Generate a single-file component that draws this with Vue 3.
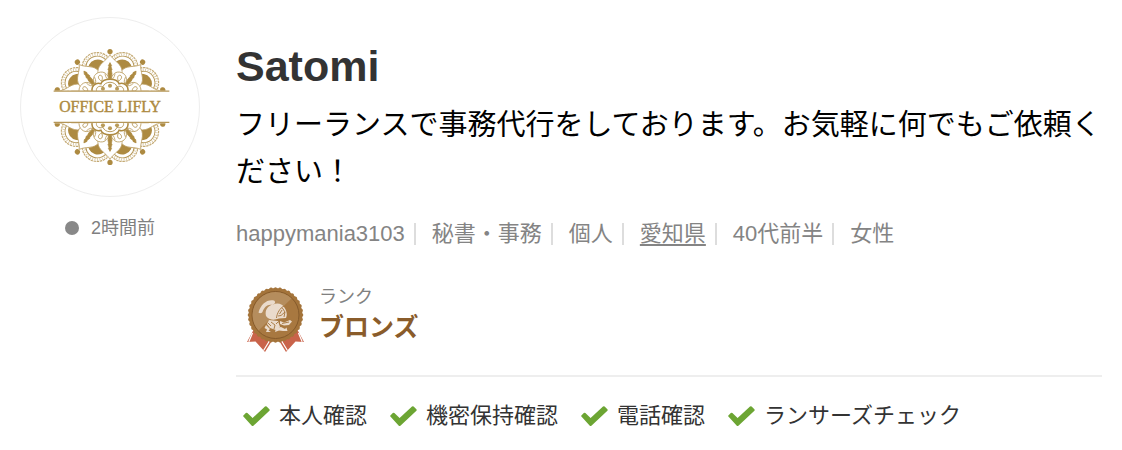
<script setup>
import { ref } from 'vue'

const user = ref({
  name: 'Satomi',
  lastSeen: '2時間前',
  intro: 'フリーランスで事務代行をしております。お気軽に何でもご依頼ください！',
  rank: 'ブロンズ'
})

const attributes = ref([
  { text: 'happymania3103' },
  { text: '秘書・事務' },
  { text: '個人' },
  { text: '愛知県', link: true },
  { text: '40代前半' },
  { text: '女性' }
])

const checks = ref(['本人確認', '機密保持確認', '電話確認', 'ランサーズチェック'])

// angles of the ornament in the logo
const petals = [-72, 72, -36, 36, 0]
const fans = [-54, -18, 18, 54]

// notches on the edge of the medal
const notches = Array.from({ length: 36 }, (_, i) => i * 10)
</script>

<template>
  <section class="profile">
    <aside class="side">
      <div class="avatar">
        <svg viewBox="0 0 180 180" role="img" aria-label="OFFICE LIFLY">
          <defs>
            <clipPath id="logo-half">
              <rect x="-60" y="-60" width="120" height="44" />
            </clipPath>
            <g id="logo-ornament" clip-path="url(#logo-half)">
              <g v-for="a in fans" :key="'f' + a" :transform="`rotate(${a})`">
                <circle cy="-41" r="15" fill="#fff" stroke="#c4aa74" stroke-width="1.2" stroke-dasharray="2.4 0.7" />
                <circle cy="-41" r="13" fill="none" stroke="#d6c5a0" stroke-width="2.4" stroke-dasharray="0.8 1.6" />
                <circle cy="-41" r="11.4" fill="#fff" stroke="#b39452" stroke-width="0.9" />
                <circle cy="-39.5" r="9.6" fill="#ad8a41" />
              </g>
              <g v-for="a in petals" :key="'p' + a" :transform="`rotate(${a})`">
                <path d="M0-52C-3-46-12-43-12-35C-12-28-6-24 0-22C6-24 12-28 12-35C12-43 3-46 0-52Z" fill="#fff" stroke="#bb9e62" stroke-width="0.8" />
                <circle cy="-55" r="2.6" fill="#ad8a41" />
              </g>
              <g v-for="a in fans" :key="'l' + a" :transform="`rotate(${a})`">
                <path d="M-7-24C-9-32-5-36 0-36C5-36 9-32 7-24Z" fill="#fff" stroke="#bb9e62" stroke-width="0.8" />
                <path d="M0-27C-3-30-2-33 0-33C2-33 3-30 0-27Z" fill="none" stroke="#b39452" stroke-width="0.8" />
              </g>
              <g v-for="a in petals" :key="'s' + a" :transform="`rotate(${a})`">
                <path d="M-5-33Q-4-27 0-27Q4-27 5-33" fill="none" stroke="#bb9e62" stroke-width="0.8" />
                <path d="M0-44L1.6-41L1-40L2-37L1.4-36L2-33L1-28H-1L-2-33L-1.4-36L-2-37L-1-40L-1.6-41Z" fill="#ad8a41" stroke="#ad8a41" stroke-width="0.7" />
              </g>
              <path d="M-17-14C-20-20-14-25-9-23C-7-29 7-29 9-23C14-25 20-20 17-14Z" fill="#fff" stroke="#ad8a41" stroke-width="1.5" />
              <path d="M-13-14C-15-19-11-22-7-20C-5-26 5-26 7-20C11-22 15-19 13-14" fill="none" stroke="#b39452" stroke-width="0.9" />
              <circle cx="-7" cy="-18" r="2" fill="#b99b59" />
              <circle cy="-21" r="2" fill="#b99b59" />
              <circle cx="7" cy="-18" r="2" fill="#b99b59" />
            </g>
          </defs>
          <use href="#logo-ornament" transform="translate(90 90) scale(1.02)" />
          <use href="#logo-ornament" transform="translate(90 90) scale(1.02 -1.02)" />
          <path d="M33 74H150M33 105.5H150" stroke="#b59657" stroke-width="1.4" />
          <text x="90" y="95" text-anchor="middle" class="logo-text">OFFICE LIFLY</text>
        </svg>
      </div>
      <p class="status"><span class="dot"></span>{{ user.lastSeen }}</p>
    </aside>

    <div class="main">
      <h1 class="name">{{ user.name }}</h1>
      <p class="intro">{{ user.intro }}</p>

      <ul class="attributes">
        <li v-for="item in attributes" :key="item.text">
          <a v-if="item.link" href="#">{{ item.text }}</a>
          <span v-else>{{ item.text }}</span>
        </li>
      </ul>

      <div class="rank">
        <svg class="medal" viewBox="0 0 60 66" aria-hidden="true">
          <g id="ribbon">
            <path d="M8 42L1 55L9.5 54.5L19 65L27 52V42Z" fill="#c9634a" />
            <path d="M6.5 46L2.8 54.8M24 53L17.6 63.5" stroke="#fff" stroke-width="1.2" />
          </g>
          <use href="#ribbon" transform="translate(59 0) scale(-1 1)" />
          <circle cx="29.5" cy="28" r="27" fill="#a4743b" />
          <circle v-for="a in notches" :key="a" cx="29.5" cy="1.9" r="1.7" fill="#a4743b" :transform="`rotate(${a} 29.5 28)`" />
          <circle cx="29.5" cy="28" r="23.5" fill="#a87840" stroke="#855a2b" stroke-width="1" />
          <path d="M12.5 43.5A23 23 0 0 1 45.5 11.5Z" fill="#b58d5d" />
          <g fill="#eadbcc">
            <path d="M12.5 25.5C15 17 21 12 28 13.5C30 15 29 17 26.5 18C22 16.5 18 20 16.5 25C15.5 26.5 13.5 26.5 12.5 25.5Z" />
            <path d="M20 29C18.5 23 22 18.5 27 17.5C32 15.5 36 17 38 20C41 24 41.5 28 40 31L33 31.5C28 33.5 23 33 20 29Z" />
            <path d="M23 33L32 34L34 40L30 43L24 41L21 37Z" />
            <path d="M20 38L24 42L22.5 43.5L25 45H20L21 42.5L18.5 41Z" />
            <path d="M30 41L35 40L39 42L40.5 40.5L41.5 44H37L33 43.5L29 45Z" />
            <path d="M34 34L38 35.5L44 33L46 34.5L43 38L38 38.5L34 37Z" />
          </g>
          <g fill="none" stroke="#a4743b" stroke-width="0.9">
            <path d="M38 19C34 21 31 26 30.5 31M36 20.5L39 25L35 28.5L32 29M39 25L38 30M36 23L33.5 27" />
            <path d="M25 35L29 38L28 42M32 35L30 37M36 36.5L43 35M22 36L25 39" />
          </g>
        </svg>
        <dl class="rank-text">
          <dt>ランク</dt>
          <dd>{{ user.rank }}</dd>
        </dl>
      </div>

      <ul class="checks">
        <li v-for="c in checks" :key="c">
          <svg class="check" viewBox="0 0 27 21" aria-hidden="true">
            <path d="M0.4 10.6Q-0.2 10 0.4 9.4L2.8 7Q3.6 6.4 4.4 7L9.6 12L22 0.6Q22.8 0 23.6 0.6L26.4 3.2Q27 4 26.4 4.8L10.4 19.8Q9.6 20.4 8.8 19.8Z" fill="#6ca533" />
          </svg>
          {{ c }}
        </li>
      </ul>
    </div>
  </section>
</template>

<style>
body {
  margin: 0;
  background: #fff;
}
</style>

<style scoped>
.profile {
  display: flex;
  align-items: flex-start;
  gap: 36px;
  padding: 17px 20px 0;
  font-family: "Liberation Sans", "Noto Sans CJK JP", sans-serif;
  color: #333;
}

.profile p,
.profile h1,
.profile ul,
.profile dl,
.profile dd {
  margin: 0;
  padding: 0;
}

.side {
  flex: none;
  width: 180px;
}

.avatar {
  box-sizing: border-box;
  height: 180px;
  border: 1px solid #eee;
  border-radius: 50%;
  overflow: hidden;
}

.avatar svg {
  display: block;
  width: 100%;
}

.logo-text {
  font-family: "Liberation Serif", serif;
  font-size: 16px;
  fill: #ad8a41;
  stroke: #ad8a41;
  stroke-width: 0.4;
}

.profile .status {
  display: flex;
  justify-content: center;
  align-items: center;
  gap: 12px;
  padding-top: 18px;
  font-size: 18px;
  line-height: 26px;
  color: #808080;
}

.dot {
  width: 14px;
  height: 14px;
  border-radius: 50%;
  background: #888;
}

.main {
  flex: 1;
  min-width: 0;
}

.profile .name {
  padding-top: 22px;
  font-size: 43px;
  line-height: 54px;
}

.profile .intro {
  margin-right: -8px;
  padding-top: 9px;
  font-size: 29px;
  line-height: 47px;
  color: #000;
}

.profile .attributes {
  display: flex;
  flex-wrap: wrap;
  padding-top: 21px;
  list-style: none;
  font-size: 22px;
  line-height: 34px;
  color: #848484;
}

.attributes li {
  display: flex;
  align-items: center;
}

.attributes li:not(:last-child)::after {
  content: "";
  width: 2px;
  height: 22px;
  margin: 0 16px 0 9px;
  background: #ddd;
}

.attributes a {
  color: inherit;
  text-underline-offset: 3px;
}

.rank {
  display: flex;
  gap: 13px;
  padding: 36px 0 22px 10px;
  border-bottom: 2px solid #eee;
}

.medal {
  width: 60px;
  height: 66px;
}

.rank-text dt {
  font-size: 18px;
  line-height: 20px;
  color: #808080;
}

.rank-text dd {
  font-size: 25px;
  font-weight: bold;
  line-height: 40px;
  color: #8a5c2b;
}

.profile .checks {
  display: flex;
  flex-wrap: wrap;
  gap: 0 23px;
  padding: 22px 0 0 7px;
  list-style: none;
  font-size: 22px;
  line-height: 34px;
}

.checks li {
  display: flex;
  align-items: center;
  gap: 9px;
}

.check {
  width: 27px;
  height: 21px;
}
</style>
